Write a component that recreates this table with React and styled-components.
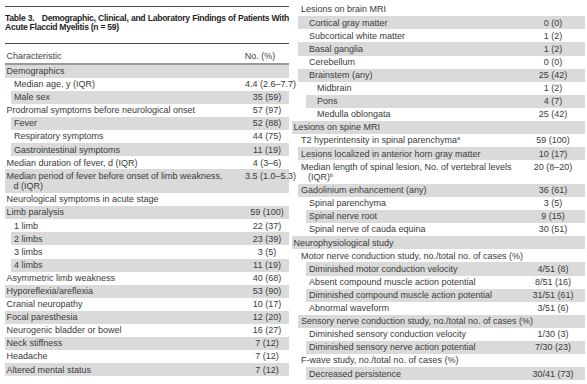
import React from 'react'
import styled, { createGlobalStyle } from 'styled-components'

const GlobalStyle = createGlobalStyle`
  body {
    margin: 0;
    background: #fff;
    font-family: "Liberation Sans", Arial, sans-serif;
    color: #3a3a3a;
  }
`

// band = where the grey shading starts, text = where the label starts
const bandOffset = [0, 6, 13.5, 21]
const textOffset = [1.5, 9, 17, 25]

const Page = styled.div`
  display: flex;
  align-items: flex-start;
  gap: 3px;
  padding-left: 5px;
  width: 587px;
  height: 384px;
  overflow: hidden;
  box-sizing: border-box;
`

const Column = styled.div`
  width: ${(p) => p.$width}px;
  padding-top: ${(p) => p.$top}px;
  flex-shrink: 0;
`

const TopRule = styled.div`
  border-top: 1px solid #4a4a4a;
`

const Title = styled.div`
  margin: 6.5px 0 10.5px;
  font-weight: bold;
  font-size: 8.6px;
  line-height: 9.6px;
  letter-spacing: -0.28px;
  color: #1e1e1e;
`

const TitleLine = styled.div`
  white-space: nowrap;
  text-align: ${(p) => (p.$full ? 'justify' : 'left')};
  text-align-last: ${(p) => (p.$full ? 'justify' : 'left')};
`

const TableNo = styled.span`
  margin-right: 5px;
`

const HeadRow = styled.div`
  display: flex;
  border-top: 1px solid #4a4a4a;
  border-bottom: 2px solid #9a9a9a;
  padding: 6.5px 0 1.5px;
  font-size: 9px;
  line-height: 10.5px;
  color: #444;
`

const HeadLabel = styled.div`
  flex: 1;
  padding-left: 1.5px;
`

const HeadValue = styled.div`
  width: ${(p) => p.$width}px;
  text-align: center;
`

const Row = styled.div`
  display: flex;
  align-items: flex-start;
  margin-left: ${(p) => bandOffset[p.$band]}px;
  padding: 1.3px 0;
  background: ${(p) => (p.$shaded ? '#dadada' : 'transparent')};
  font-size: 9px;
  line-height: 10.5px;
  white-space: nowrap;
`

const Label = styled.div`
  flex: 1;
  padding-left: ${(p) => p.$pad}px;
`

const Wrap = styled.span`
  display: block;
  padding-left: 7px;
`

const Value = styled.div`
  width: ${(p) => p.$width}px;
  text-align: center;
`

const Sup = styled.sup`
  font-size: 5.5px;
  line-height: 0;
  vertical-align: 3px;
`

const leftRows = [
  { label: 'Demographics', level: 0 },
  { label: 'Median age, y (IQR)', value: '4.4 (2.6–7.7)', level: 1 },
  { label: 'Male sex', value: '35 (59)', level: 1 },
  { label: 'Prodromal symptoms before neurological onset', value: '57 (97)', level: 0 },
  { label: 'Fever', value: '52 (88)', level: 1 },
  { label: 'Respiratory symptoms', value: '44 (75)', level: 1 },
  { label: 'Gastrointestinal symptoms', value: '11 (19)', level: 1 },
  { label: 'Median duration of fever, d (IQR)', value: '4 (3–6)', level: 0 },
  {
    label: 'Median period of fever before onset of limb weakness,',
    more: 'd (IQR)',
    value: '3.5 (1.0–5.3)',
    level: 0,
  },
  { label: 'Neurological symptoms in acute stage', level: 0 },
  { label: 'Limb paralysis', value: '59 (100)', level: 0 },
  { label: '1 limb', value: '22 (37)', level: 1 },
  { label: '2 limbs', value: '23 (39)', level: 1 },
  { label: '3 limbs', value: '3 (5)', level: 1 },
  { label: '4 limbs', value: '11 (19)', level: 1 },
  { label: 'Asymmetric limb weakness', value: '40 (68)', level: 0 },
  { label: 'Hyporeflexia/areflexia', value: '53 (90)', level: 0 },
  { label: 'Cranial neuropathy', value: '10 (17)', level: 0 },
  { label: 'Focal paresthesia', value: '12 (20)', level: 0 },
  { label: 'Neurogenic bladder or bowel', value: '16 (27)', level: 0 },
  { label: 'Neck stiffness', value: '7 (12)', level: 0 },
  { label: 'Headache', value: '7 (12)', level: 0 },
  { label: 'Altered mental status', value: '7 (12)', level: 0 },
]

const rightRows = [
  { label: 'Lesions on brain MRI', level: 1 },
  { label: 'Cortical gray matter', value: '0 (0)', level: 2, band: 1 },
  { label: 'Subcortical white matter', value: '1 (2)', level: 2, band: 1 },
  { label: 'Basal ganglia', value: '1 (2)', level: 2, band: 1 },
  { label: 'Cerebellum', value: '0 (0)', level: 2, band: 1 },
  { label: 'Brainstem (any)', value: '25 (42)', level: 2, band: 1 },
  { label: 'Midbrain', value: '1 (2)', level: 3, band: 2 },
  { label: 'Pons', value: '4 (7)', level: 3, band: 2 },
  { label: 'Medulla oblongata', value: '25 (42)', level: 3, band: 2 },
  { label: 'Lesions on spine MRI', level: 0 },
  { label: 'T2 hyperintensity in spinal parenchyma', sup: 'a', value: '59 (100)', level: 1 },
  { label: 'Lesions localized in anterior horn gray matter', value: '10 (17)', level: 1 },
  {
    label: 'Median length of spinal lesion, No. of vertebral levels',
    more: '(IQR)',
    moreSup: 'b',
    value: '20 (8–20)',
    level: 1,
  },
  { label: 'Gadolinium enhancement (any)', value: '36 (61)', level: 1 },
  { label: 'Spinal parenchyma', value: '3 (5)', level: 2 },
  { label: 'Spinal nerve root', value: '9 (15)', level: 2 },
  { label: 'Spinal nerve of cauda equina', value: '30 (51)', level: 2 },
  { label: 'Neurophysiological study', level: 0 },
  { label: 'Motor nerve conduction study, no./total no. of cases (%)', level: 1 },
  { label: 'Diminished motor conduction velocity', value: '4/51 (8)', level: 2 },
  { label: 'Absent compound muscle action potential', value: '8/51 (16)', level: 2 },
  { label: 'Diminished compound muscle action potential', value: '31/51 (61)', level: 2 },
  { label: 'Abnormal waveform', value: '3/51 (6)', level: 2 },
  { label: 'Sensory nerve conduction study, no./total no. of cases (%)', level: 1 },
  { label: 'Diminished sensory conduction velocity', value: '1/30 (3)', level: 2 },
  { label: 'Diminished sensory nerve action potential', value: '7/30 (23)', level: 2 },
  { label: 'F-wave study, no./total no. of cases (%)', level: 1 },
  { label: 'Decreased persistence', value: '30/41 (73)', level: 2 },
]

const TableRows = ({ rows, valueWidth, firstShaded }) =>
  rows.map((row, i) => {
    const band = row.band ?? row.level
    return (
      <Row key={i} $band={band} $shaded={(i % 2 === 0) === firstShaded}>
        <Label $pad={textOffset[row.level] - bandOffset[band]}>
          {row.label}
          {row.sup && <Sup>{row.sup}</Sup>}
          {row.more && (
            <Wrap>
              {row.more}
              {row.moreSup && <Sup>{row.moreSup}</Sup>}
            </Wrap>
          )}
        </Label>
        <Value $width={valueWidth}>{row.value}</Value>
      </Row>
    )
  })

export default function App() {
  return (
    <>
      <GlobalStyle />
      <Page>
        <Column $width={284} $top={6}>
          <TopRule />
          <Title>
            <TitleLine $full>
              <TableNo>Table 3.</TableNo> Demographic, Clinical, and Laboratory Findings of
              Patients With
            </TitleLine>
            <TitleLine>Acute Flaccid Myelitis (n = 59)</TitleLine>
          </Title>
          <HeadRow>
            <HeadLabel>Characteristic</HeadLabel>
            <HeadValue $width={58}>No. (%)</HeadValue>
          </HeadRow>
          <TableRows rows={leftRows} valueWidth={44} firstShaded />
        </Column>
        <Column $width={293} $top={3.2}>
          <TableRows rows={rightRows} valueWidth={64} firstShaded={false} />
        </Column>
      </Page>
    </>
  )
}
